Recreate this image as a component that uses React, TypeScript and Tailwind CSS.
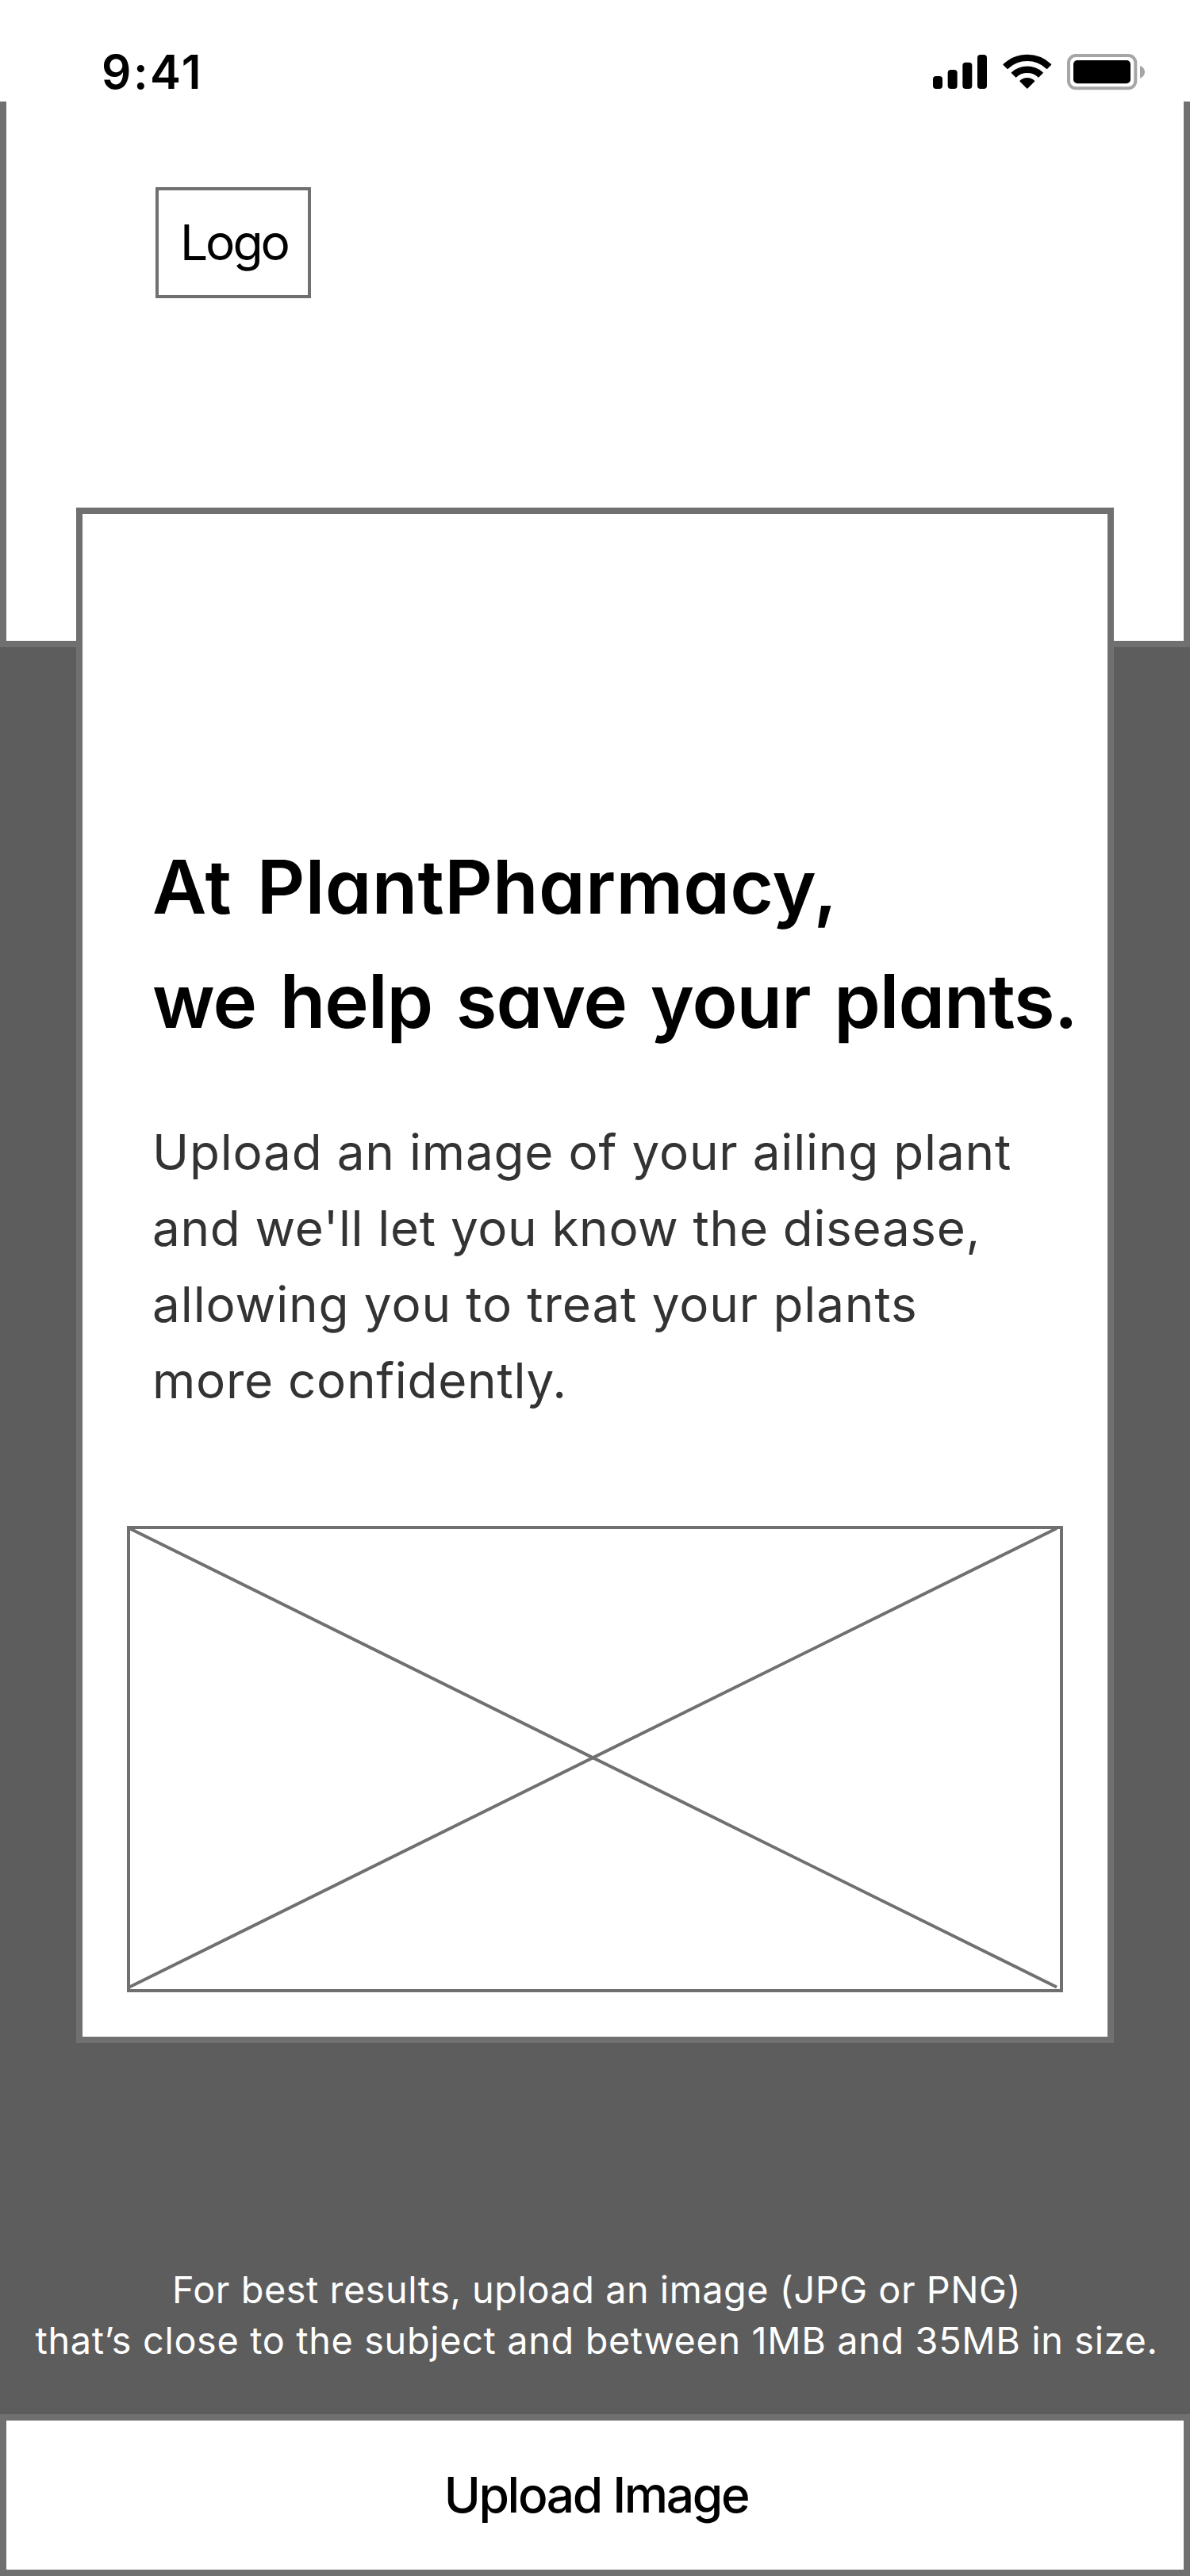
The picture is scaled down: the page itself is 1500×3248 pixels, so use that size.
function SignalIcon() {
  return (
    <svg width="68" height="44" viewBox="0 0 68 44" fill="black" aria-hidden="true">
      <rect x="0" y="28" width="12" height="16" rx="4" />
      <rect x="18.67" y="20" width="12" height="24" rx="4" />
      <rect x="37.33" y="10.67" width="12" height="33.33" rx="4" />
      <rect x="56" y="1" width="12" height="43" rx="4" />
    </svg>
  );
}

function WifiIcon() {
  return (
    <svg width="62" height="44" viewBox="0 0 62 44" fill="black" stroke="black" strokeWidth="1.6" strokeLinejoin="round" aria-hidden="true">
      <path d="M1.2 13.4 A43.2 43.2 0 0 1 60.4 13.4 L55.6 18.2 A35.8 35.8 0 0 0 6 18.2 Z" />
      <path d="M11.5 23.8 A28.6 28.6 0 0 1 50.1 23.8 L45.1 28.8 A20.8 20.8 0 0 0 16.5 28.8 Z" />
      <path d="M22.1 34.3 A12.9 12.9 0 0 1 39.5 34.3 L30.8 42.9 Z" />
    </svg>
  );
}

function BatteryIcon() {
  return (
    <svg width="98" height="46" viewBox="0 0 98 46" aria-hidden="true">
      <rect x="2" y="2" width="84.3" height="41.3" rx="9" fill="none" stroke="#a6a6a6" strokeWidth="4" />
      <rect x="8" y="8" width="72" height="29.3" rx="5" fill="black" />
      <path d="M92 14.7 V30.7 C95.6 29.2 98 26.1 98 22.7 C98 19.3 95.6 16.2 92 14.7 Z" fill="#a6a6a6" />
    </svg>
  );
}

function StatusBar() {
  return (
    <div className="flex h-32 items-start justify-between bg-white pl-32 pr-[57px]">
      <span className="mt-[55px] text-[58.5px] leading-[72px] font-semibold tracking-[2.5px]">9:41</span>
      <div className="mt-[68px] flex items-start">
        <SignalIcon />
        <div className="ml-5">
          <WifiIcon />
        </div>
        <div className="ml-[19px]">
          <BatteryIcon />
        </div>
      </div>
    </div>
  );
}

function ImagePlaceholder() {
  return (
    <div className="h-[588px] w-[1180px] border-4 border-[#707070]">
      <svg width="1172" height="580" viewBox="0 0 1172 580" stroke="#707070" strokeWidth="4" className="block overflow-visible" aria-hidden="true">
        <path d="M-1 -1 L1168 577.5 M-1 577.5 L1168 -1" />
      </svg>
    </div>
  );
}

export default function App() {
  return (
    <div className="flex h-[3248px] w-[1500px] flex-col overflow-hidden bg-[#5d5d5d] font-['Inter',sans-serif] text-black">
      <StatusBar />
      <header className="h-[688px] shrink-0 border-x-8 border-b-8 border-[#707070] bg-white pt-[108px] pl-[188px]">
        <div className="flex h-[140px] w-[196px] items-center border-4 border-[#707070] pl-[27px] text-[62.3px] tracking-[-3.1px]">
          Logo
        </div>
      </header>

      <main className="relative mx-24 -mt-[176px] h-[1936px] shrink-0 border-8 border-[#707070] bg-white pt-[398px]">
        <h1 className="ml-[88px] text-[94px] leading-[144px] font-semibold whitespace-nowrap [font-feature-settings:'cv11']">
          <span className="block tracking-[0.3px] [word-spacing:8px]">At PlantPharmacy,</span>
          <span className="block tracking-[-1px] [word-spacing:7px]">we help save your plants.</span>
        </h1>
        <p className="mt-[71px] ml-[88px] text-[62px] leading-[96px] whitespace-nowrap text-[#333]">
          <span className="block tracking-[0.8px]">Upload an image of your ailing plant</span>
          <span className="block tracking-[0.66px]">and we'll let you know the disease,</span>
          <span className="block tracking-[0.9px]">allowing you to treat your plants</span>
          <span className="block tracking-[0.7px]">more confidently.</span>
        </p>
        <div className="mt-[135px] ml-14">
          <ImagePlaceholder />
        </div>
      </main>

      <p className="mt-[279px] pl-[4px] text-center text-[46.8px] leading-[64px] whitespace-nowrap text-white">
        <span className="block tracking-[0.54px]">For best results, upload an image (JPG or PNG)</span>
        <span className="block tracking-[0.65px]">that’s close to the subject and between 1MB and 35MB in size.</span>
      </p>

      <button className="mt-auto flex h-[204px] shrink-0 items-center justify-center border-8 border-[#707070] bg-white pl-[3px] text-[62.3px] font-medium tracking-[-2.35px]">
        Upload Image
      </button>
    </div>
  );
}
